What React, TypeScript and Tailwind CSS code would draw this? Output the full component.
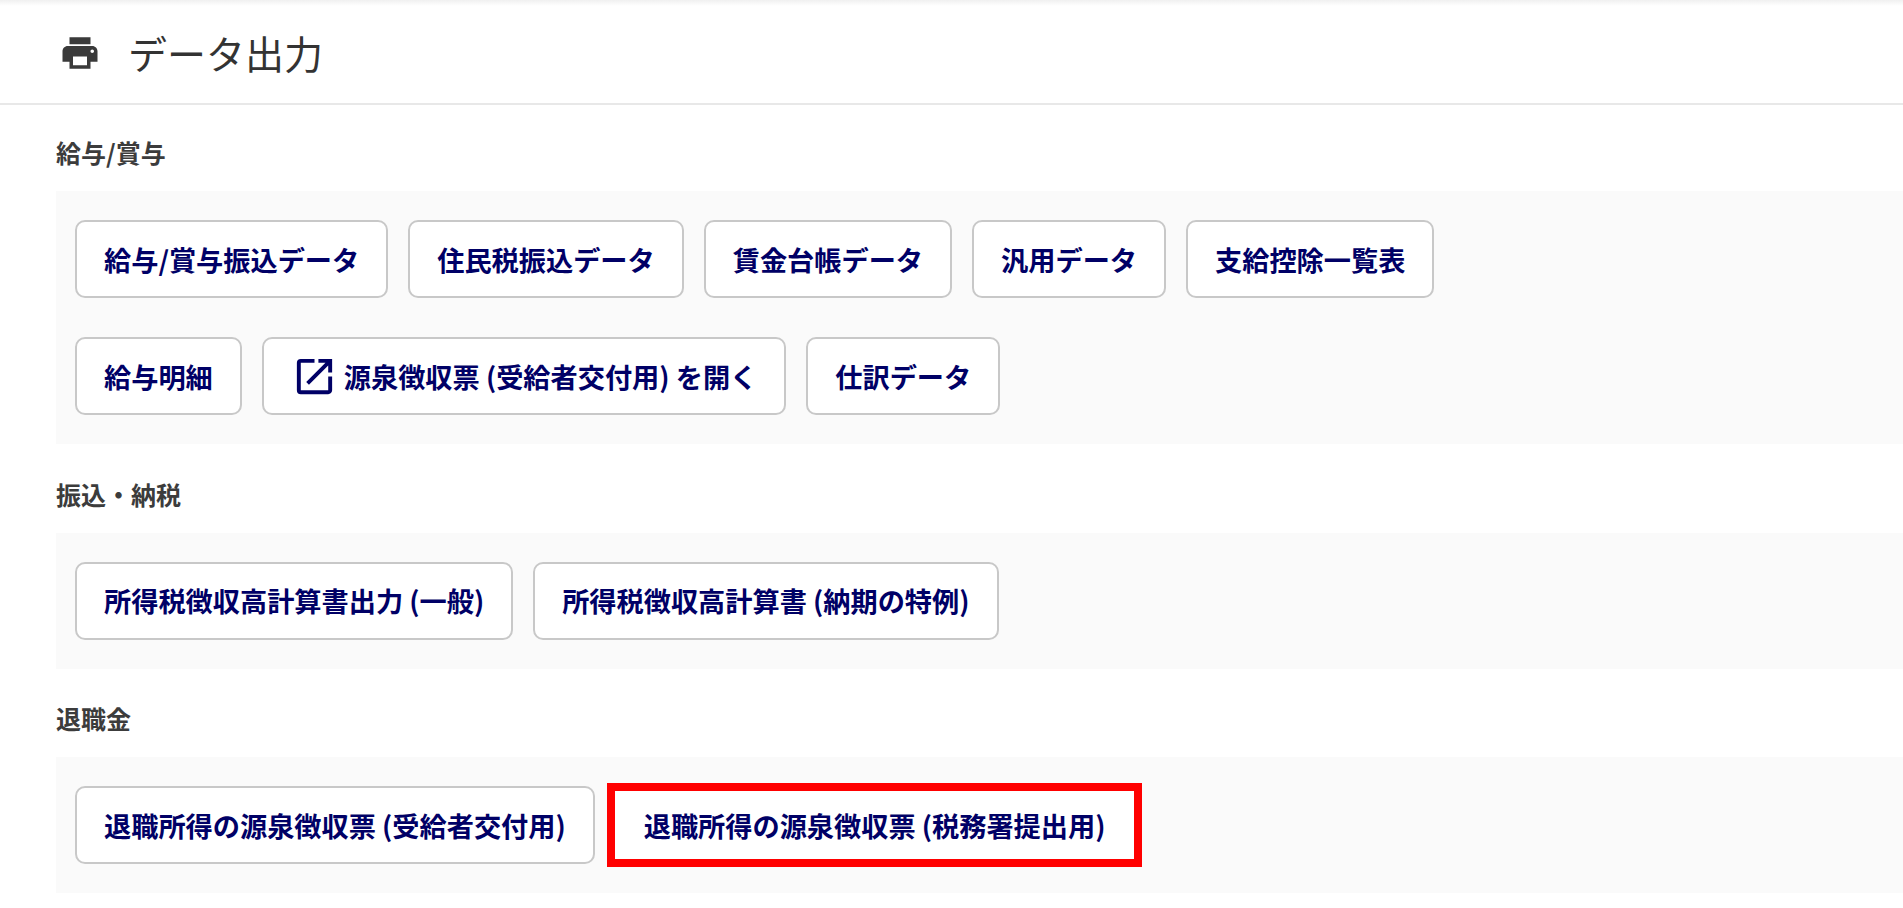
import React from 'react';
import clsx from 'clsx';
import { MdPrint, MdOpenInNew } from 'react-icons/md';

const Btn: React.FC<{ label: string; icon?: boolean; marked?: boolean }> = ({ label, icon, marked }) => (
  <div className="relative">
    <button
      className={clsx(
        'flex h-[78px] items-center whitespace-nowrap border-2 bg-white px-[27px] text-[27.2px] font-bold text-[#000066]',
        marked ? 'border-white' : 'rounded-[10px] border-[#c8c8c8]'
      )}
    >
      {icon && <MdOpenInNew size={47} className="mr-[6px]" />}
      {label}
    </button>
    {marked && <div className="absolute inset-x-[-8px] inset-y-[-3px] border-[8px] border-[#ff0000]" />}
  </div>
);

const Section: React.FC<{ title: string; rows: React.ReactNode[] }> = ({ title, rows }) => (
  <section>
    <h3 className="mb-[22px] ml-[56px] h-[34px] text-[25px] leading-[34px] font-bold text-[#3c3c3c]">{title}</h3>
    <div className="ml-[56px] flex flex-col gap-[39px] bg-[#fafafa] pt-[29px] pr-[20px] pb-[29px] pl-[19px]">
      {rows.map((row, i) => (
        <div key={i} className="flex gap-[20px]">
          {row}
        </div>
      ))}
    </div>
  </section>
);

export default function App() {
  return (
    <div className="h-[908px] overflow-hidden bg-white font-['Noto_Sans_CJK_JP','Noto_Sans',sans-serif]">
      <div className="h-[6px] bg-gradient-to-b from-[#f0f0f0] to-white" />
      <header className="flex h-[99px] items-center gap-[27px] border-b-2 border-[#e8e8e8] pb-[4px] pl-[59px]">
        <MdPrint size={42} className="text-[#3a3a3a]" />
        <h1 className="text-[39px] font-normal text-[#333333]">データ出力</h1>
      </header>
      <div className="flex flex-col gap-[32.5px] pt-[30px]">
        <Section
          title="給与/賞与"
          rows={[
            <>
              <Btn label="給与/賞与振込データ" />
              <Btn label="住民税振込データ" />
              <Btn label="賃金台帳データ" />
              <Btn label="汎用データ" />
              <Btn label="支給控除一覧表" />
            </>,
            <>
              <Btn label="給与明細" />
              <Btn icon label="源泉徴収票 (受給者交付用) を開く" />
              <Btn label="仕訳データ" />
            </>,
          ]}
        />
        <Section
          title="振込・納税"
          rows={[
            <>
              <Btn label="所得税徴収高計算書出力 (一般)" />
              <Btn label="所得税徴収高計算書 (納期の特例)" />
            </>,
          ]}
        />
        <Section
          title="退職金"
          rows={[
            <>
              <Btn label="退職所得の源泉徴収票 (受給者交付用)" />
              <Btn marked label="退職所得の源泉徴収票 (税務署提出用)" />
            </>,
          ]}
        />
      </div>
    </div>
  );
}
